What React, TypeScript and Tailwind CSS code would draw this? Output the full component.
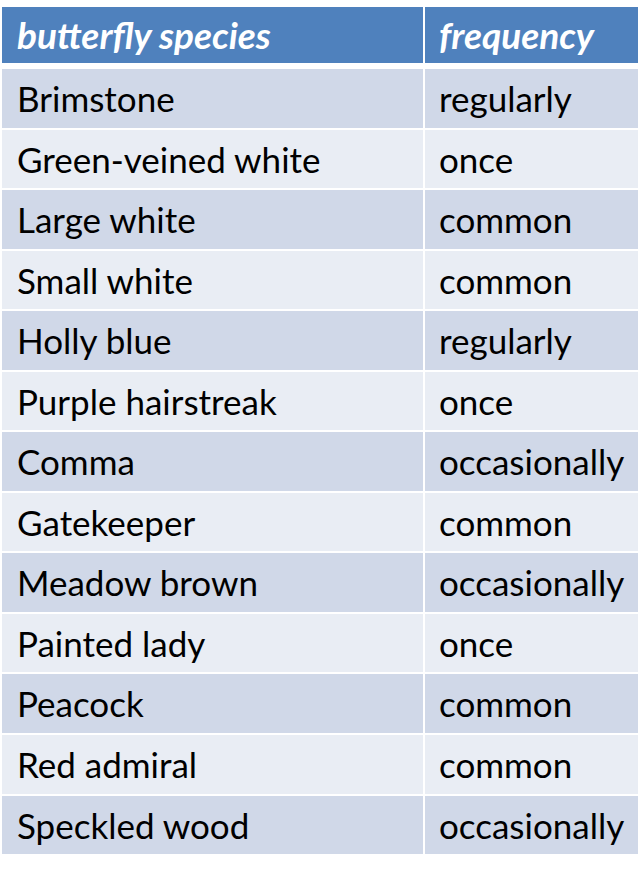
import React from "react";

const rows: [string, string][] = [
  ["Brimstone", "regularly"],
  ["Green-veined white", "once"],
  ["Large white", "common"],
  ["Small white", "common"],
  ["Holly blue", "regularly"],
  ["Purple hairstreak", "once"],
  ["Comma", "occasionally"],
  ["Gatekeeper", "common"],
  ["Meadow brown", "occasionally"],
  ["Painted lady", "once"],
  ["Peacock", "common"],
  ["Red admiral", "common"],
  ["Speckled wood", "occasionally"],
];

export default function App() {
  return (
    <div className="w-[644px] h-[873px] bg-white pt-[7px] pl-[2px] font-['Lato',sans-serif] text-black">
      <div className="w-[636px] flex flex-col">
        <div className="flex h-[56px] mb-[6px] gap-[2px]">
          <div className="w-[421px] bg-[#4f81bd] flex items-center pl-[15px] text-white italic font-bold text-[37px]">
            butterfly species
          </div>
          <div className="flex-1 bg-[#4f81bd] flex items-center pl-[14px] text-white italic font-bold text-[37px]">
            frequency
          </div>
        </div>
        <div className="flex flex-col gap-[2px]">
          {rows.map(([a, b], i) => (
            <div key={a} className="flex h-[58.55px] gap-[2px]">
              <div
                className={`w-[421px] flex items-center pl-[15px] text-[35px] ${
                  i % 2 === 0 ? "bg-[#d0d8e8]" : "bg-[#e9edf4]"
                }`}
              >
                {a}
              </div>
              <div
                className={`flex-1 flex items-center pl-[14px] text-[35px] ${
                  i % 2 === 0 ? "bg-[#d0d8e8]" : "bg-[#e9edf4]"
                }`}
              >
                {b}
              </div>
            </div>
          ))}
        </div>
      </div>
    </div>
  );
}
